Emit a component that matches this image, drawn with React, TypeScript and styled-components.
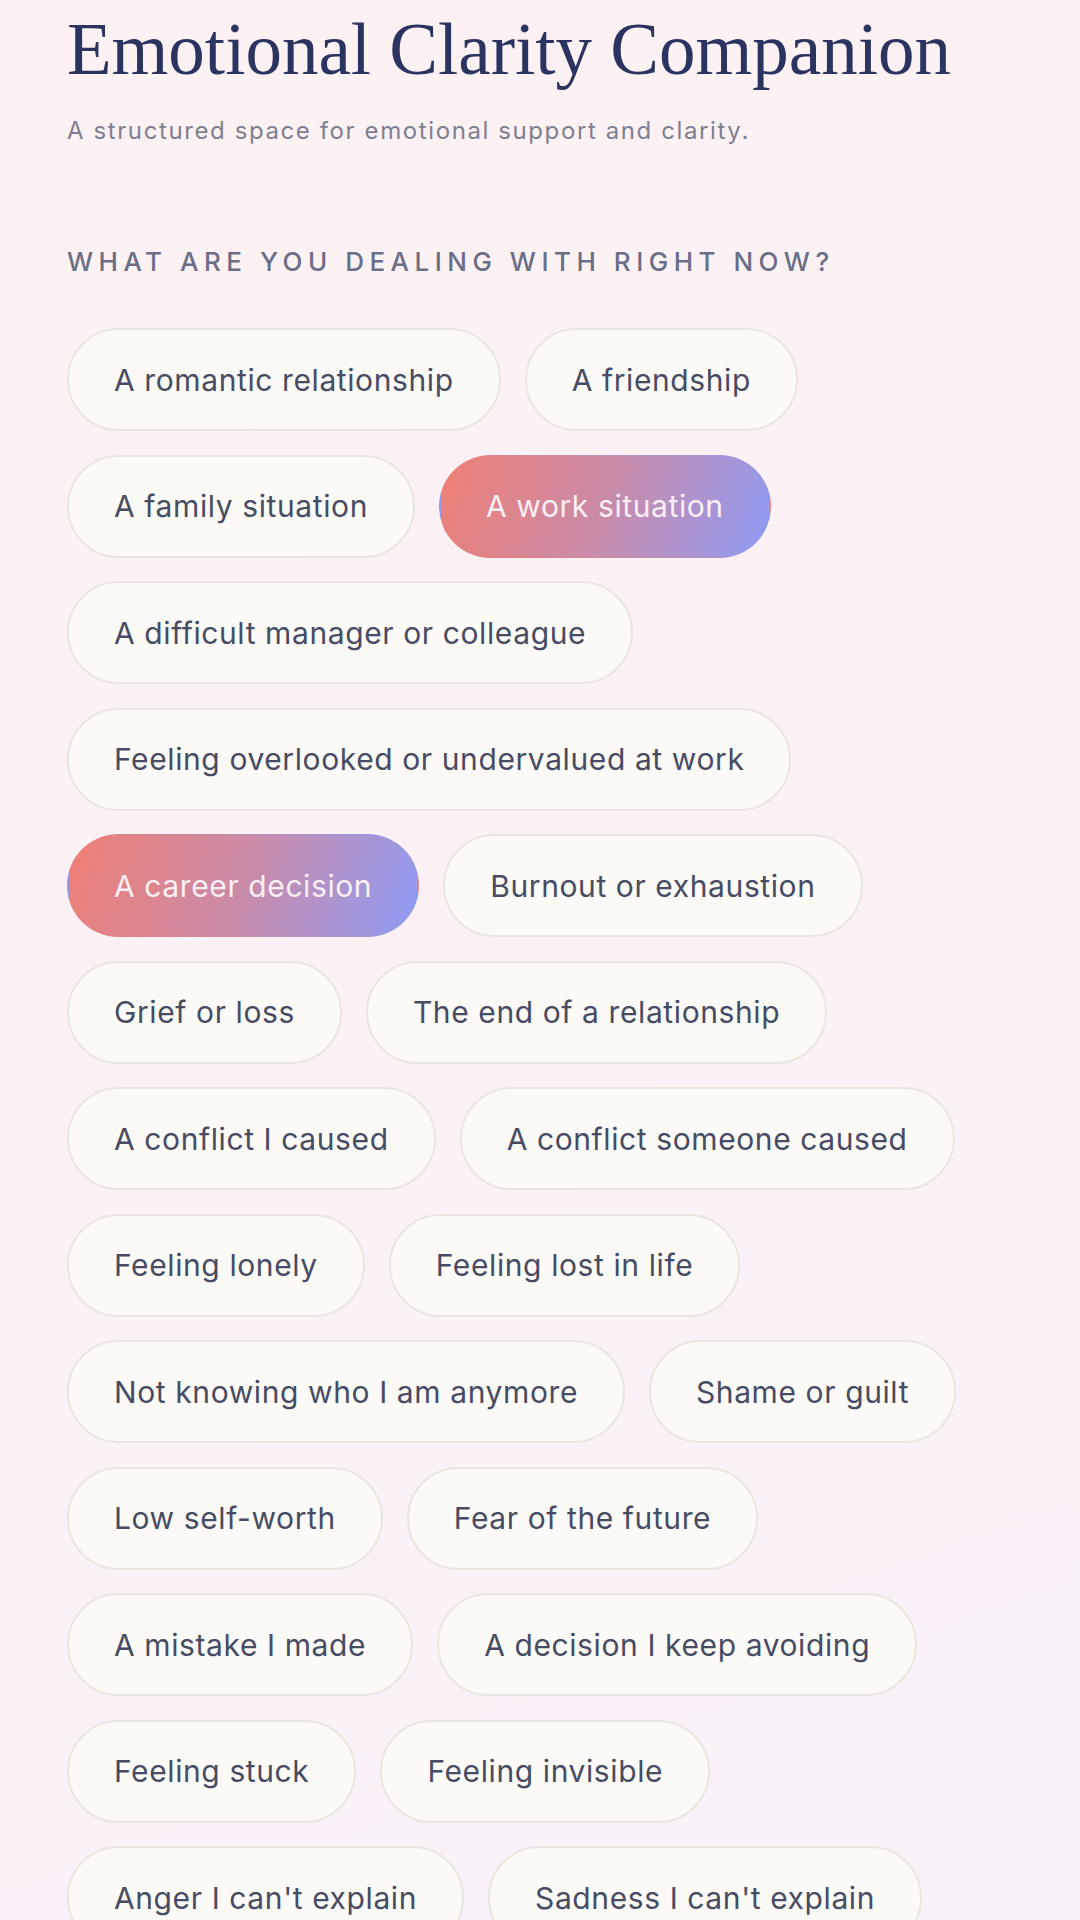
import React from 'react';
import styled, { createGlobalStyle } from 'styled-components';

const GlobalStyle = createGlobalStyle`
  html, body {
    margin: 0;
    padding: 0;
  }
  body {
    background: linear-gradient(160deg, #fcf2f3 0%, #fbf1f5 50%, #f8f1f8 100%);
    min-height: 1920px;
    overflow: hidden;
  }
`;

const Page = styled.div`
  width: 1080px;
  min-height: 1920px;
  box-sizing: border-box;
  padding: 7px 67px 0;
  font-family: 'Inter', 'Liberation Sans', sans-serif;
`;

const Title = styled.h1`
  margin: 0;
  font-family: 'Liberation Serif', 'DejaVu Serif', serif;
  font-weight: 400;
  font-size: 73px;
  line-height: 85px;
  color: #2b3461;
`;

const Subtitle = styled.p`
  margin: 24px 0 0;
  font-size: 24px;
  line-height: 30px;
  letter-spacing: 1.6px;
  color: #7d8090;
`;

const Question = styled.h2`
  margin: 100px 0 0;
  font-size: 26px;
  line-height: 32px;
  font-weight: 500;
  letter-spacing: 5.5px;
  color: #6a6e86;
`;

const Chips = styled.div`
  display: flex;
  flex-wrap: wrap;
  column-gap: 24px;
  row-gap: 23.5px;
  margin-top: 50px;
`;

const Chip = styled.button<{ $active?: boolean }>`
  height: 103px;
  box-sizing: border-box;
  padding: 0 45px;
  border-radius: 52px;
  font-family: 'Inter', 'Liberation Sans', sans-serif;
  font-size: 30px;
  font-weight: 400;
  letter-spacing: 0.6px;
  cursor: pointer;
  border: 2px solid ${(p) => (p.$active ? 'transparent' : '#ebe5df')};
  background: ${(p) =>
    p.$active
      ? 'linear-gradient(110deg, #ef7f74 0%, #c98ba8 50%, #8e9cf6 100%)'
      : '#fbfaf6'};
  color: ${(p) => (p.$active ? '#fbeff4' : '#474c64')};
`;

const options = [
  'A romantic relationship',
  'A friendship',
  'A family situation',
  'A work situation',
  'A difficult manager or colleague',
  'Feeling overlooked or undervalued at work',
  'A career decision',
  'Burnout or exhaustion',
  'Grief or loss',
  'The end of a relationship',
  'A conflict I caused',
  'A conflict someone caused',
  'Feeling lonely',
  'Feeling lost in life',
  'Not knowing who I am anymore',
  'Shame or guilt',
  'Low self-worth',
  'Fear of the future',
  'A mistake I made',
  'A decision I keep avoiding',
  'Feeling stuck',
  'Feeling invisible',
  "Anger I can't explain",
  "Sadness I can't explain",
];

const selected = ['A work situation', 'A career decision'];

export default function App() {
  return (
    <>
      <GlobalStyle />
      <Page>
        <Title>Emotional Clarity Companion</Title>
        <Subtitle>A structured space for emotional support and clarity.</Subtitle>
        <Question>WHAT ARE YOU DEALING WITH RIGHT NOW?</Question>
        <Chips>
          {options.map((o) => (
            <Chip key={o} $active={selected.includes(o)}>
              {o}
            </Chip>
          ))}
        </Chips>
      </Page>
    </>
  );
}
